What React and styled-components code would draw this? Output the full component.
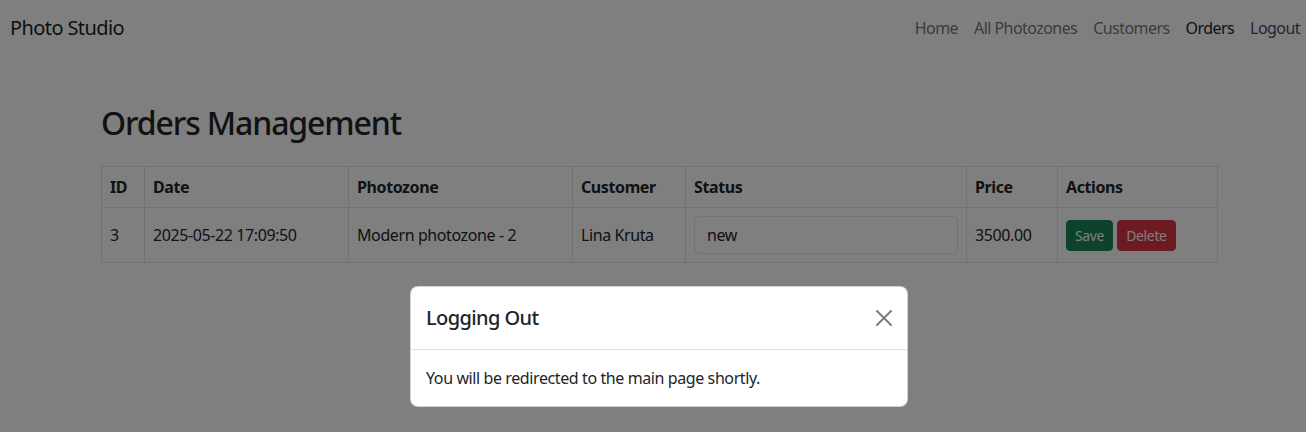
import React from "react";
import styled, { createGlobalStyle } from "styled-components";

const GlobalStyle = createGlobalStyle`
    body {
        margin: 0;
        background: #fff;
        color: #212529;
        font-family: "Noto Sans", "Liberation Sans", sans-serif;
        font-size: 16px;
        line-height: 1.5;
        overflow: hidden;
    }
    * { box-sizing: border-box; }
`

// page is laid out a bit wider than the window, as in the screenshot
const Page = styled.div`
    position: relative;
    width: 1318px;
    height: 432px;
    overflow: hidden;
`

const Navbar = styled.nav`
    display: flex;
    justify-content: space-between;
    align-items: center;
    padding: 8px 10px;
`

const Brand = styled.a`
    font-size: 20px;
    line-height: 30px;
    padding: 5px 0;
    color: rgba(0, 0, 0, 0.9);
    letter-spacing: -0.03em;
`

const NavList = styled.div`
    display: flex;
`

const NavLink = styled.a`
    padding: 8px;
    color: ${(p) => p.$color || "rgba(33, 37, 41, 0.65)"};
    letter-spacing: -0.035em;
`

const Container = styled.main`
    width: 1140px;
    margin: 0 auto;
    padding: 48px 12px 0;
`

const Title = styled.h2`
    margin: 0 0 24px;
    font-size: 32px;
    font-weight: 500;
    line-height: 1.2;
    letter-spacing: -0.035em;
`

const Table = styled.table`
    width: 1116px;
    border-collapse: collapse;
    table-layout: fixed;
    letter-spacing: -0.025em;

    th, td {
        border: 1px solid #dee2e6;
        padding: 8px;
        text-align: left;
        vertical-align: middle;
    }
    th { font-weight: 700; }
`

const StatusInput = styled.div`
    height: 38px;
    padding: 6px 12px;
    border: 1px solid #dee2e6;
    border-radius: 6px;
    background: #fff;
`

const Actions = styled.div`
    display: flex;
    gap: 4px;
`

const SmallButton = styled.button`
    font-family: inherit;
    font-size: 14px;
    line-height: 1.5;
    letter-spacing: -0.025em;
    padding: 4px 8px;
    border: 1px solid ${(p) => p.$bg};
    border-radius: 4px;
    background: ${(p) => p.$bg};
    color: #fff;
`

const Backdrop = styled.div`
    position: absolute;
    inset: 0;
    background: rgba(0, 0, 0, 0.5);
`

const Dialog = styled.div`
    width: 498px;
    margin: 286px auto 0;
    background: #fff;
    border: 1px solid rgba(0, 0, 0, 0.175);
    border-radius: 8px;
`

const DialogHeader = styled.div`
    display: flex;
    justify-content: space-between;
    align-items: center;
    padding: 16px 15px 16px 15px;
    border-bottom: 1px solid #dee2e6;
`

const DialogTitle = styled.h5`
    margin: 0;
    font-size: 20px;
    font-weight: 500;
    line-height: 1.5;
    letter-spacing: -0.03em;
`

const CloseButton = styled.button`
    display: flex;
    padding: 0;
    border: 0;
    background: none;
    opacity: 0.5;
`

const DialogBody = styled.div`
    padding: 16px 15px;
    letter-spacing: -0.025em;
`

const columns = [43, 204, 224, 113, 281, 91, 160];

export default function App() {
    return (
        <>
            <GlobalStyle />
            <Page>
                <Navbar>
                    <Brand>Photo Studio</Brand>
                    <NavList>
                        <NavLink>Home</NavLink>
                        <NavLink>All Photozones</NavLink>
                        <NavLink>Customers</NavLink>
                        <NavLink $color="#212529">Orders</NavLink>
                        <NavLink $color="#3e4e68">Logout</NavLink>
                    </NavList>
                </Navbar>

                <Container>
                    <Title>Orders Management</Title>
                    <Table>
                        <colgroup>
                            {columns.map((w, i) => <col key={i} style={{ width: w }} />)}
                        </colgroup>
                        <thead>
                            <tr>
                                <th>ID</th>
                                <th>Date</th>
                                <th>Photozone</th>
                                <th>Customer</th>
                                <th>Status</th>
                                <th>Price</th>
                                <th>Actions</th>
                            </tr>
                        </thead>
                        <tbody>
                            <tr>
                                <td>3</td>
                                <td>2025-05-22 17:09:50</td>
                                <td>Modern photozone - 2</td>
                                <td>Lina Kruta</td>
                                <td><StatusInput>new</StatusInput></td>
                                <td>3500.00</td>
                                <td>
                                    <Actions>
                                        <SmallButton $bg="#198754">Save</SmallButton>
                                        <SmallButton $bg="#dc3545">Delete</SmallButton>
                                    </Actions>
                                </td>
                            </tr>
                        </tbody>
                    </Table>
                </Container>

                <Backdrop>
                    <Dialog>
                        <DialogHeader>
                            <DialogTitle>Logging Out</DialogTitle>
                            <CloseButton aria-label="Close">
                                <svg width="16" height="16" viewBox="0 0 16 16">
                                    <path d="M.293.293a1 1 0 0 1 1.414 0L8 6.586 14.293.293a1 1 0 1 1 1.414 1.414L9.414 8l6.293 6.293a1 1 0 0 1-1.414 1.414L8 9.414l-6.293 6.293a1 1 0 0 1-1.414-1.414L6.586 8 .293 1.707a1 1 0 0 1 0-1.414" fill="#000" />
                                </svg>
                            </CloseButton>
                        </DialogHeader>
                        <DialogBody>You will be redirected to the main page shortly.</DialogBody>
                    </Dialog>
                </Backdrop>
            </Page>
        </>
    );
}
